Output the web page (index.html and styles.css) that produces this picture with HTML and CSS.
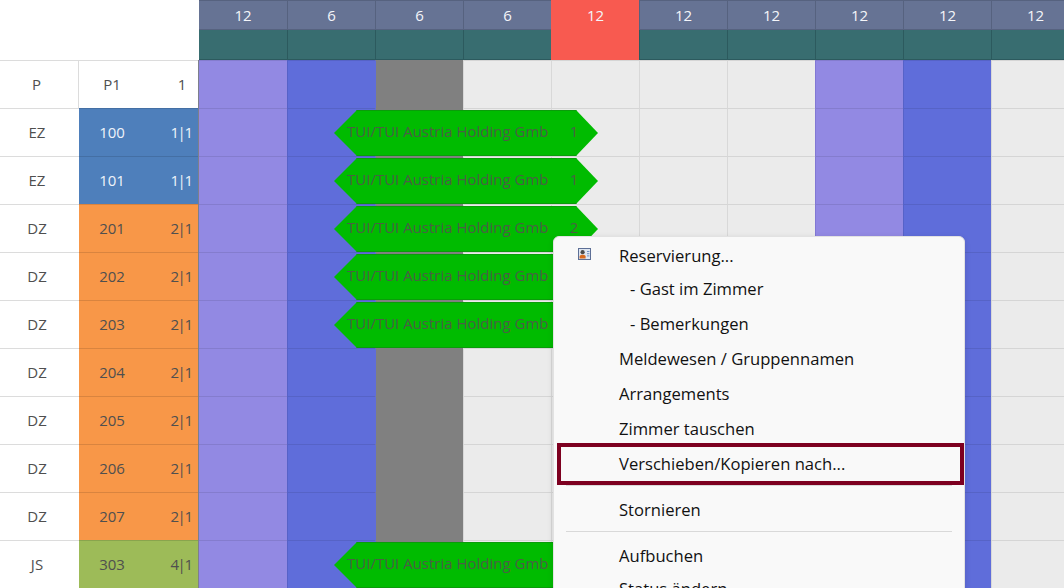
FILE: index.html
```html
<!DOCTYPE html>
<html lang="de">
<head>
<meta charset="utf-8">
<title>Zimmerplan</title>
<link rel="stylesheet" href="styles.css">
</head>
<body>
<div class="plan">
  <div class="row head">
    <div class="head-blank"></div>
    <div class="head-cols">
      <div class="head-col"><span class="count">12</span><span class="band"></span></div>
      <div class="head-col"><span class="count">6</span><span class="band"></span></div>
      <div class="head-col"><span class="count">6</span><span class="band"></span></div>
      <div class="head-col"><span class="count">6</span><span class="band"></span></div>
      <div class="head-col alert"><span class="count">12</span><span class="band"></span></div>
      <div class="head-col"><span class="count">12</span><span class="band"></span></div>
      <div class="head-col"><span class="count">12</span><span class="band"></span></div>
      <div class="head-col"><span class="count">12</span><span class="band"></span></div>
      <div class="head-col"><span class="count">12</span><span class="band"></span></div>
      <div class="head-col"><span class="count">12</span><span class="band"></span></div>
    </div>
  </div>

  <div class="row">
    <div class="type labelled">P</div>
    <div class="room plain"><span class="num">P1</span><span class="ratio">1</span></div>
    <div class="cells"><i></i><i></i><i></i><i></i><i></i><i></i><i></i><i></i><i></i><i></i></div>
  </div>
  <div class="row">
    <div class="type">EZ</div>
    <div class="room blue"><span class="num">100</span><span class="ratio">1|1</span></div>
    <div class="cells"><i></i><i></i><i></i><i></i><i></i><i></i><i></i><i></i><i></i><i></i></div>
    <div class="bar"><span class="bar-name">TUI/TUI Austria Holding Gmb</span><span class="bar-num">1</span></div>
  </div>
  <div class="row">
    <div class="type">EZ</div>
    <div class="room blue"><span class="num">101</span><span class="ratio">1|1</span></div>
    <div class="cells"><i></i><i></i><i></i><i></i><i></i><i></i><i></i><i></i><i></i><i></i></div>
    <div class="bar"><span class="bar-name">TUI/TUI Austria Holding Gmb</span><span class="bar-num">1</span></div>
  </div>
  <div class="row">
    <div class="type">DZ</div>
    <div class="room orange"><span class="num">201</span><span class="ratio">2|1</span></div>
    <div class="cells"><i></i><i></i><i></i><i></i><i></i><i></i><i></i><i></i><i></i><i></i></div>
    <div class="bar"><span class="bar-name">TUI/TUI Austria Holding Gmb</span><span class="bar-num">2</span></div>
  </div>
  <div class="row">
    <div class="type">DZ</div>
    <div class="room orange"><span class="num">202</span><span class="ratio">2|1</span></div>
    <div class="cells"><i></i><i></i><i></i><i></i><i></i><i></i><i></i><i></i><i></i><i></i></div>
    <div class="bar"><span class="bar-name">TUI/TUI Austria Holding Gmb</span><span class="bar-num">2</span></div>
  </div>
  <div class="row">
    <div class="type">DZ</div>
    <div class="room orange"><span class="num">203</span><span class="ratio">2|1</span></div>
    <div class="cells"><i></i><i></i><i></i><i></i><i></i><i></i><i></i><i></i><i></i><i></i></div>
    <div class="bar"><span class="bar-name">TUI/TUI Austria Holding Gmb</span><span class="bar-num">2</span></div>
  </div>
  <div class="row">
    <div class="type">DZ</div>
    <div class="room orange"><span class="num">204</span><span class="ratio">2|1</span></div>
    <div class="cells"><i></i><i></i><i></i><i></i><i></i><i></i><i></i><i></i><i></i><i></i></div>
  </div>
  <div class="row">
    <div class="type">DZ</div>
    <div class="room orange"><span class="num">205</span><span class="ratio">2|1</span></div>
    <div class="cells"><i></i><i></i><i></i><i></i><i></i><i></i><i></i><i></i><i></i><i></i></div>
  </div>
  <div class="row">
    <div class="type">DZ</div>
    <div class="room orange"><span class="num">206</span><span class="ratio">2|1</span></div>
    <div class="cells"><i></i><i></i><i></i><i></i><i></i><i></i><i></i><i></i><i></i><i></i></div>
  </div>
  <div class="row">
    <div class="type">DZ</div>
    <div class="room orange"><span class="num">207</span><span class="ratio">2|1</span></div>
    <div class="cells"><i></i><i></i><i></i><i></i><i></i><i></i><i></i><i></i><i></i><i></i></div>
  </div>
  <div class="row">
    <div class="type">JS</div>
    <div class="room green"><span class="num">303</span><span class="ratio">4|1</span></div>
    <div class="cells"><i></i><i></i><i></i><i></i><i></i><i></i><i></i><i></i><i></i><i></i></div>
    <div class="bar"><span class="bar-name">TUI/TUI Austria Holding Gmb</span><span class="bar-num">4</span></div>
  </div>

  <div class="menu">
    <div class="item first">
      <svg class="item-icon" viewBox="0 0 13 12" aria-hidden="true">
        <rect x="0.5" y="0.500" width="12" height="11" fill="#dfe6f1" stroke="#5d6f96"/>
        <circle cx="4.6" cy="4.200" r="2.100" fill="#4a4a4a"/>
        <path d="M1.600 10.600V8.600c0-1 1-1.800 3-1.800s3 .8 3 1.800v2z" fill="#d8691e"/>
        <path d="M9 3.500h2.400M9 5.700h2.400M9 7.900h2.400" stroke="#6f8fc4"/>
      </svg>
      Reservierung...
    </div>
    <div class="item sub">- Gast im Zimmer</div>
    <div class="item sub">- Bemerkungen</div>
    <div class="item">Meldewesen / Gruppennamen</div>
    <div class="item">Arrangements</div>
    <div class="item">Zimmer tauschen</div>
    <div class="item marked">Verschieben/Kopieren nach...</div>
    <hr class="sep">
    <div class="item">Stornieren</div>
    <hr class="sep">
    <div class="item">Aufbuchen</div>
    <div class="item last">Status ändern</div>
  </div>
</div>
</body>
</html>
```
FILE: styles.css
```css
* { box-sizing: border-box; }
html, body { margin: 0; height: 100%; overflow: hidden; background: #fff; }

.plan {
  position: relative;
  width: 1064px;
  height: 588px;
  overflow: hidden;
  font: 15px/1 "Open Sans", "Noto Sans", sans-serif;
  color: #4f4f4f;
}

.row {
  position: relative;
  display: flex;
  height: 48px;
}

/* header */
.head { height: 60px; }
.head-blank { width: 198px; flex: none; }
.head-cols { display: flex; flex: none; margin-left: 1px; }
.head-col { display: flex; flex-direction: column; width: 88px; flex: none; }
.head-col + .head-col .count { border-left: 1px solid #56627f; }
.head-col + .head-col .band { border-left: 1px solid #2c5a5e; }
.count {
  display: flex;
  align-items: center;
  justify-content: center;
  height: 30px;
  background: #667394;
  border-top: 1px solid #56627f;
  border-bottom: 1px solid #56627f;
  color: #f4f6fa;
}
.band {
  height: 30px;
  background: #386d70;
  border-bottom: 1px solid #2c5a5e;
}
.head-col.alert .count,
.head-col.alert .band { background: #f85a50; border-color: #f85a50; }

/* left columns */
.type {
  display: flex;
  align-items: center;
  justify-content: center;
  width: 79px;
  flex: none;
  padding: 0 5px 0 0;
  border-top: 1px solid #dcdcdc;
}
.type.labelled { border-right: 1px solid #dcdcdc; }

.room {
  display: flex;
  align-items: center;
  width: 119px;
  flex: none;
  border-top: 1px solid rgba(0, 0, 0, .12);
}
.num { width: 66px; text-align: center; }
.ratio { width: 32px; margin-left: auto; text-align: center; }
.room:not(.plain) .ratio { letter-spacing: -1.4px; margin-right: 1px; }
.room.plain { border-top-color: #dcdcdc; }
.room.blue { background: #4e7fbb; color: #eef3fa; }
.room.orange { background: #f89748; }
.room.green { background: #9dbb58; }

/* timeline cells */
.cells {
  display: flex;
  flex: none;
  border-left: 1px solid #7d7f8c;
}
.cells i {
  display: block;
  width: 88px;
  flex: none;
  background: #ebebeb;
  border-top: 1px solid rgba(0, 0, 0, .09);
  border-left: 1px solid #d8d8d8;
}
.cells i:first-child { border-left: 0; }
.cells i:nth-child(1), .cells i:nth-child(8) { background: #9289e3; border-left-color: #8178d4; }
.cells i:nth-child(2), .cells i:nth-child(9) { background: #5f6dda; border-left-color: #5662c8; }
.cells i:nth-child(3) { background: #808080; border-left-color: #5f6dda; border-top-color: #808080; }

/* booking bars lie over the timeline */
.bar {
  position: absolute;
  left: 334px;
  top: 2px;
  width: 264px;
  height: 46px;
  display: flex;
  align-items: center;
  padding: 0 19px 3px 13px;
  background: #00bb00;
  border-top: 1px solid #0a9c0a;
  border-bottom: 1px solid #0a9c0a;
  clip-path: polygon(0 50%, 23px 0, 242px 0, 100% 50%, 242px 100%, 23px 100%);
  color: #4b5f45;
}
.bar-name { flex: 1; white-space: nowrap; }
.bar-num { width: 10px; text-align: center; }

/* context menu */
.menu {
  position: absolute;
  left: 553px;
  top: 236px;
  display: flex;
  flex-direction: column;
  width: 412px;
  padding-top: 3px;
  background: #f9f9f9;
  border: 1px solid #e2e2e2;
  border-radius: 6px;
  box-shadow: 0 2px 6px rgba(0, 0, 0, .12);
  font: 16.6px/1 "Open Sans", "Noto Sans", sans-serif;
  color: #111;
}
.item {
  position: relative;
  display: flex;
  align-items: center;
  flex: none;
  height: 35px;
  padding: 2px 0 0 65px;
}
.item.first { height: 31px; }
.item.sub { padding-left: 76px; }
.item.last { height: 31px; }
.item-icon {
  position: absolute;
  left: 24px;
  top: 8px;
  width: 13px;
  height: 12px;
}
.item.marked {
  margin: -3px 0 -4px 3px;
  width: 407px;
  height: 42px;
  padding: 0 0 0 58px;
  border: 4px solid #7d0020;
}
.sep {
  flex: none;
  height: 1px;
  margin: 4px 12px 6px;
  border: 0;
  background: #d9d9d9;
}
```
